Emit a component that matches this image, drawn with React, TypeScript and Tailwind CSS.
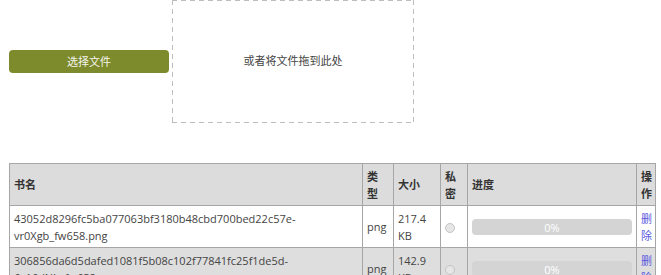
import React from "react";

const font = { fontFamily: '"Open Sans", "Noto Sans CJK SC", sans-serif' };

function Radio() {
  return <span className="inline-block w-[10px] h-[10px] rounded-full border border-[#c4c4c4] bg-[#e6e6e6] align-middle" />;
}

function Progress() {
  return (
    <div className="h-[16px] rounded-[4px] bg-[#d4d4d4] text-white text-[11px] leading-[17px] text-center">0%</div>
  );
}

export default function App() {
  const rows = [
    { name: ["43052d8296fc5ba077063bf3180b48cbd700bed22c57e-", "vr0Xgb_fw658.png"], size: "217.4 KB", bg: "bg-white" },
    { name: ["306856da6d5dafed1081f5b08c102f77841fc25f1de5d-", "6c16dNb_fw658.png"], size: "142.9 KB", bg: "bg-[#dedede]" },
  ];
  const td = "border border-[#a6a6a6] px-[4px] py-[3px] align-middle";
  const th = `${td} text-left font-bold text-[#333]`;
  return (
    <div className="w-[661px] h-[275px] overflow-hidden bg-white text-[#444] text-[11px]" style={font}>
      <div className="flex items-center pl-[9px]">
        <button className="w-[160px] h-[23px] rounded-[4px] bg-[#7d8b2d] text-[#f4f4ec] text-[11px] leading-[23px] text-center">
          选择文件
        </button>
        <div className="ml-[3px] w-[242px] h-[123px] flex items-center justify-center text-[11px] text-[#444] bg-no-repeat [background-image:repeating-linear-gradient(90deg,#bdbdbd_0_5px,transparent_5px_9px),repeating-linear-gradient(90deg,#bdbdbd_0_5px,transparent_5px_9px),repeating-linear-gradient(180deg,#bdbdbd_0_5px,transparent_5px_9px),repeating-linear-gradient(180deg,#bdbdbd_0_5px,transparent_5px_9px)] [background-size:100%_1px,100%_1px,1px_100%,1px_100%] [background-position:0_0,0_100%,0_0,100%_0]">
          或者将文件拖到此处
        </div>
      </div>
      <div className="pl-[9px] mt-[40px]">
        <table className="table-fixed border-collapse w-[646px] leading-[17px]">
          <colgroup>
            <col className="w-[353px]" />
            <col className="w-[31px]" />
            <col className="w-[47px]" />
            <col className="w-[27px]" />
            <col className="w-[169px]" />
            <col className="w-[19px]" />
          </colgroup>
          <thead>
            <tr className="bg-[#dcdcdc] h-[42px]">
              <th className={th}>书名</th>
              <th className={th}>
                类<br />型
              </th>
              <th className={th}>大小</th>
              <th className={th}>
                私<br />密
              </th>
              <th className={th}>进度</th>
              <th className={th}>
                操<br />作
              </th>
            </tr>
          </thead>
          <tbody>
            {rows.map((r, i) => (
              <tr key={i} className={`${r.bg} h-[42px]`}>
                <td className={td}>
                  {r.name[0]}
                  <br />
                  {r.name[1]}
                </td>
                <td className={td}>png</td>
                <td className={td}>{r.size}</td>
                <td className={td}>
                  <Radio />
                </td>
                <td className={td}>
                  <Progress />
                </td>
                <td className={`${td} text-[#5b5be0]`}>
                  删<br />除
                </td>
              </tr>
            ))}
          </tbody>
        </table>
      </div>
    </div>
  );
}
